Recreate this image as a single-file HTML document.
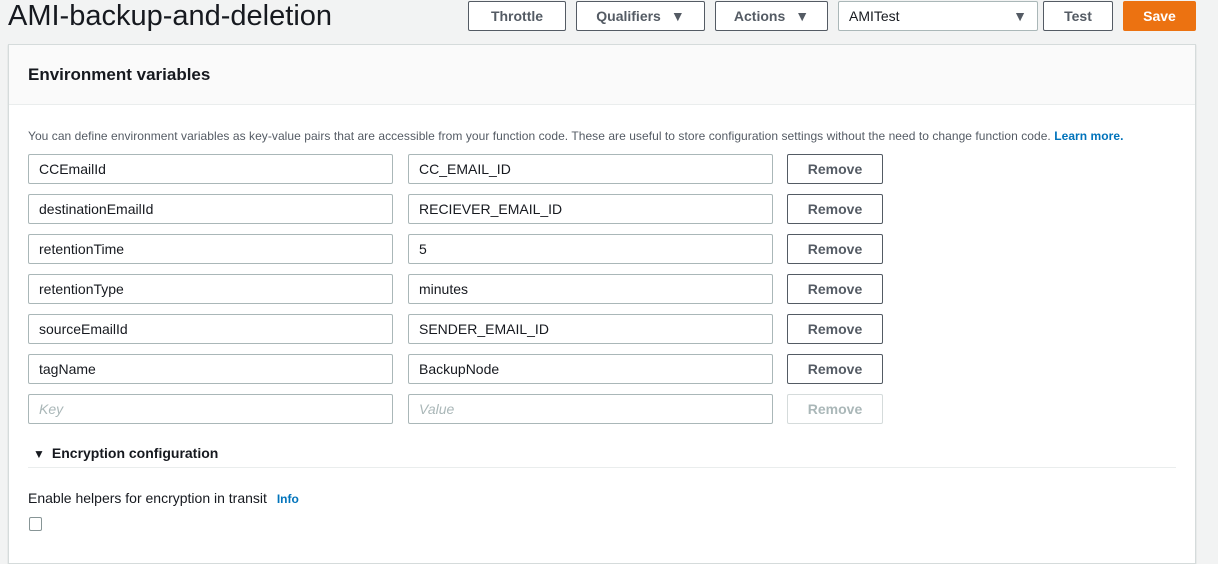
<!DOCTYPE html>
<html><head><style>
body{margin:0;width:1218px;height:540px;background:#f2f3f3;font-family:"Liberation Sans",sans-serif;color:#16191f;position:relative;overflow:hidden}
.a{position:absolute;box-sizing:border-box}
.btn{border:1px solid #545b64;background:#fff;border-radius:2px;font-weight:bold;font-size:14px;color:#545b64;display:flex;align-items:center;justify-content:center}
.in{border:1px solid #aab7b8;background:#fff;border-radius:2px;font-size:14px;padding-left:10px;display:flex;align-items:center;height:30px;width:365px}
.rm{height:30px;width:96px}
.tri{font-size:14px;margin-left:10px}
</style></head><body>
<div class="a" style="left:8px;top:0;font-size:29px;line-height:32px">AMI-backup-and-deletion</div>
<div class="a btn" style="left:468px;top:1px;width:98px;height:30px">Throttle</div>
<div class="a btn" style="left:576px;top:1px;width:129px;height:30px">Qualifiers <span class="tri">▼</span></div>
<div class="a btn" style="left:715px;top:1px;width:113px;height:30px">Actions <span class="tri">▼</span></div>
<div class="a" style="left:838px;top:1px;width:200px;height:30px;border:1px solid #aab7b8;background:#fff;border-radius:2px;font-size:14px;padding-left:10px;display:flex;align-items:center">AMITest<span style="position:absolute;right:10px;color:#545b64;font-size:14px">▼</span></div>
<div class="a btn" style="left:1043px;top:1px;width:70px;height:30px">Test</div>
<div class="a btn" style="left:1123px;top:1px;width:73px;height:30px;background:#ec7211;border-color:#ec7211;color:#fff">Save</div>
<div class="a" style="left:8px;top:44px;width:1188px;height:520px;background:#fff;border:1px solid #d5dbdb;box-shadow:0 1px 1px rgba(0,28,36,.2)">
<div style="height:59px;background:#fafafa;border-bottom:1px solid #eaeded;font-weight:bold;font-size:17px;line-height:59px;padding-left:19px">Environment variables</div>
</div>
<div class="a" style="left:28px;top:129px;font-size:12px;letter-spacing:0.05px;color:#545b64;white-space:nowrap">You can define environment variables as key-value pairs that are accessible from your function code. These are useful to store configuration settings without the need to change function code. <b style="color:#0073bb">Learn more.</b></div>
<div class="a in" style="left:28px;top:154px">CCEmailId</div><div class="a in" style="left:408px;top:154px">CC_EMAIL_ID</div><div class="a btn rm" style="left:787px;top:154px">Remove</div>
<div class="a in" style="left:28px;top:194px">destinationEmailId</div><div class="a in" style="left:408px;top:194px">RECIEVER_EMAIL_ID</div><div class="a btn rm" style="left:787px;top:194px">Remove</div>
<div class="a in" style="left:28px;top:234px">retentionTime</div><div class="a in" style="left:408px;top:234px">5</div><div class="a btn rm" style="left:787px;top:234px">Remove</div>
<div class="a in" style="left:28px;top:274px">retentionType</div><div class="a in" style="left:408px;top:274px">minutes</div><div class="a btn rm" style="left:787px;top:274px">Remove</div>
<div class="a in" style="left:28px;top:314px">sourceEmailId</div><div class="a in" style="left:408px;top:314px">SENDER_EMAIL_ID</div><div class="a btn rm" style="left:787px;top:314px">Remove</div>
<div class="a in" style="left:28px;top:354px">tagName</div><div class="a in" style="left:408px;top:354px">BackupNode</div><div class="a btn rm" style="left:787px;top:354px">Remove</div>
<div class="a in" style="left:28px;top:394px;color:#aab7b8;font-style:italic">Key</div><div class="a in" style="left:408px;top:394px;color:#aab7b8;font-style:italic">Value</div><div class="a btn rm" style="left:787px;top:394px;border-color:#d5dbdb;color:#aab7b8">Remove</div>
<div class="a" style="left:33px;top:445px;font-size:14px;font-weight:bold;color:#16191f"><span style="font-size:12px;margin-right:7px">▼</span>Encryption configuration</div>
<div class="a" style="left:28px;top:467px;width:1148px;height:1px;background:#eaeded"></div>
<div class="a" style="left:28px;top:490px;font-size:14px">Enable helpers for encryption in transit <b style="color:#0073bb;font-size:12px;margin-left:6px">Info</b></div>
<div class="a" style="left:29px;top:517px;width:13px;height:14px;border:1px solid #879596;border-radius:2px;background:#fff"></div>
</body></html>
